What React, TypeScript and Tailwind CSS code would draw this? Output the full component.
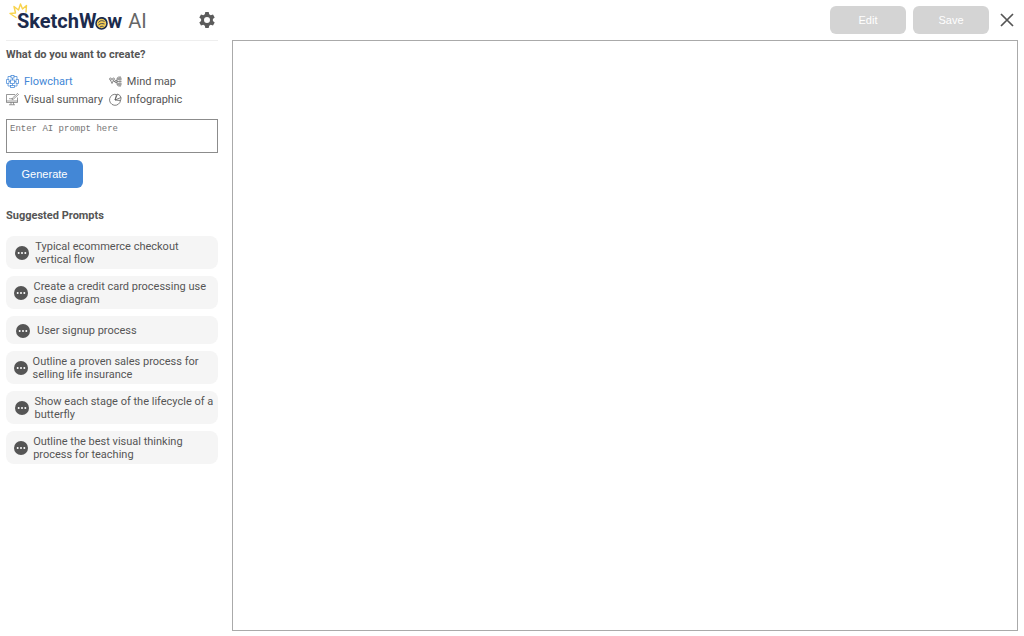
import { useState } from 'react';

const prompts = [
  'Typical ecommerce checkout vertical flow',
  'Create a credit card processing use case diagram',
  'User signup process',
  'Outline a proven sales process for selling life insurance',
  'Show each stage of the lifecycle of a butterfly',
  'Outline the best visual thinking process for teaching',
];

function FlowchartIcon() {
  return (
    <svg className="h-[13px] w-[13px] shrink-0" viewBox="0 0 26 26" fill="none" stroke="currentColor" strokeWidth="1.5" aria-hidden="true">
      <rect x="10" y="1" width="6" height="5" />
      <path d="M10 3H4v5M16 3h6v5M13 6v4M13 18v3M4 18v4h5M22 18v4h-5" />
      <path d="M1 9h5v8H1zM20 9h5v8h-5zM6 13h3M17 13h3" />
      <rect x="9" y="10" width="8" height="7" />
      <rect x="9" y="21" width="8" height="4" />
    </svg>
  );
}

function MindMapIcon() {
  return (
    <svg className="h-[13px] w-[13px] shrink-0" viewBox="0 0 26 26" fill="none" stroke="currentColor" strokeWidth="1.3" aria-hidden="true">
      <circle cx="3" cy="8" r="2" />
      <circle cx="9" cy="8" r="2" />
      <path d="M3 10l3 7 3-7M9 13h4M17 13h8M24 4h-4c-3 0-4 2-4 5v8c0 3 1 5 4 5h4M16 8h4M16 18h4" />
      <rect x="20" y="6" width="4" height="4" />
      <rect x="20" y="16" width="4" height="4" />
      <circle cx="14" cy="13" r="2.500" />
    </svg>
  );
}

function SummaryIcon() {
  return (
    <svg className="h-[13px] w-[13px] shrink-0" viewBox="0 0 26 26" fill="none" stroke="currentColor" strokeWidth="1.2" aria-hidden="true">
      <path d="M18 3H1v16h22V9M1 16h22M10 19v4M15 19v4M6 23.500h12" />
      <path d="M23 1l2 2-10 9-3 1 1-3zM6 12c2-2 3 1 6-1" />
    </svg>
  );
}

function InfographicIcon() {
  return (
    <svg className="h-[13px] w-[13px] shrink-0" viewBox="0 0 26 26" fill="none" stroke="currentColor" strokeWidth="1.5" aria-hidden="true">
      <path d="M15 3A11 11 0 1 0 23 15L12 14z" />
      <path d="M17 2l-5 12 12-5A11 11 0 0 0 17 2zM24 9a11 11 0 0 1-1 6" />
    </svg>
  );
}

const kinds = [
  { label: 'Flowchart', Icon: FlowchartIcon },
  { label: 'Mind map', Icon: MindMapIcon },
  { label: 'Visual summary', Icon: SummaryIcon },
  { label: 'Infographic', Icon: InfographicIcon },
];

function Logo() {
  return (
    <div className="relative flex items-baseline pt-0.5 pl-[11px] leading-6">
      <svg className="absolute -top-1 left-[3px] h-[18px] w-5" viewBox="0 0 20 18" fill="none" stroke="#f8d34c" strokeWidth="1.4" strokeLinecap="round" strokeLinejoin="round" aria-hidden="true">
        <path d="M7 14.500L1 10.500l5.500-.5L5 3.500l4.500 3.500 2-6L13.500 6l4-3.500L17 9" />
      </svg>
      <span className="relative font-[Roboto,sans-serif] text-[20px] font-bold text-[#1c2b4d]">
        SketchW
        <span className="relative">
          o
          <svg className="absolute bottom-[3px] -left-px h-[13px] w-[13px]" viewBox="0 0 13 13" fill="none" aria-hidden="true">
            <circle cx="6.500" cy="6.500" r="5.500" fill="#f3cc57" stroke="#1c2b4d" strokeWidth="1.500" />
            <path d="M3.500 5.500c2-2.500 4-2 6-1M3.500 8c2-2 4-1.500 6-1M5 10c1.500-1 2.500-.8 3.500-.5" stroke="#1c2b4d" strokeWidth=".8" />
          </svg>
        </span>
        w
      </span>
      <span className="ml-1.5 font-[Roboto,sans-serif] text-[20px] text-[#666]">AI</span>
    </div>
  );
}

export default function App() {
  const [kind, setKind] = useState('Flowchart');
  const [prompt, setPrompt] = useState('');

  return (
    <div className="flex h-screen bg-white pr-1.5 pb-[5px] pl-1.5 font-[Roboto,sans-serif] text-[11px] leading-[13px] text-[#555]">
      <aside className="mr-3.5 w-[212px] shrink-0">
        <header className="flex h-[41px] items-center justify-between border-b border-[#eee]">
          <Logo />
          <button type="button" aria-label="Settings" className="mr-0.5">
            <svg className="h-[18px] w-[18px]" viewBox="0 0 18 18" fill="#5c5c5c" aria-hidden="true">
              <path
                fillRule="evenodd"
                d="M7.300 1h3.400l.5 2.300 1.500.9 2.300-.8 1.700 3-1.800 1.600v2l1.800 1.600-1.700 3-2.300-.8-1.500.9-.5 2.300H7.300l-.5-2.300-1.500-.9-2.300.8-1.700-3L3.100 10V8L1.300 6.400l1.700-3 2.300.8 1.500-.9zM9 6a3 3 0 1 0 0 6 3 3 0 0 0 0-6z"
              />
            </svg>
          </button>
        </header>

        <h1 className="mt-[7px] font-bold">What do you want to create?</h1>

        <div className="mt-[11px] grid w-max grid-cols-[max-content_max-content] gap-x-1.5">
          {kinds.map(({ label, Icon }) => (
            <button
              key={label}
              type="button"
              aria-pressed={kind === label}
              onClick={() => setKind(label)}
              className={
                kind === label
                  ? 'flex h-[18px] items-center gap-[5px] text-[#4387d6]'
                  : 'flex h-[18px] items-center gap-[5px]'
              }
            >
              <Icon />
              {label}
            </button>
          ))}
        </div>

        <textarea
          aria-label="AI prompt"
          placeholder="Enter AI prompt here"
          value={prompt}
          onChange={(e) => setPrompt(e.target.value)}
          className="mt-[11px] block h-[34px] w-full resize-none border border-[#8c8c8c] px-[3px] py-1 font-['Liberation_Mono',monospace] text-[9px] leading-[11px] placeholder:text-[#757575]"
        />

        <button
          type="button"
          className="mt-[7px] h-7 w-[77px] rounded-md bg-[#4387d6] font-['Liberation_Sans',sans-serif] text-white"
        >
          Generate
        </button>

        <h2 className="mt-[21px] font-bold">Suggested Prompts</h2>

        <ul className="mt-3.5 flex flex-col gap-[7px]">
          {prompts.map((text) => (
            <li key={text}>
              <button
                type="button"
                onClick={() => setPrompt(text)}
                className="flex min-h-7 w-full items-center rounded-lg bg-[#f5f5f5] pt-1 pr-0.5 pb-[3px] pl-[3px] text-left"
              >
                <span className="flex w-7 min-w-0 justify-center px-[7px]">
                  <svg className="h-3.5 w-3.5 shrink-0" viewBox="0 0 14 14" aria-hidden="true">
                    <circle cx="7" cy="7" r="7" fill="#555" />
                    <g fill="#fff">
                      <circle cx="3.700" cy="7" r="1" />
                      <circle cx="7" cy="7" r="1" />
                      <circle cx="10.300" cy="7" r="1" />
                    </g>
                  </svg>
                </span>
                <span>{text}</span>
              </button>
            </li>
          ))}
        </ul>
      </aside>

      <main className="flex min-w-0 flex-1 flex-col">
        <div className="flex h-10 shrink-0 items-center justify-end gap-[7px] pr-1 font-['Liberation_Sans',sans-serif] text-white">
          <button type="button" className="h-7 w-[76px] rounded-md bg-[#d4d4d4]">
            Edit
          </button>
          <button type="button" className="h-7 w-[76px] rounded-md bg-[#d4d4d4]">
            Save
          </button>
          <button type="button" aria-label="Close" className="ml-1">
            <svg className="h-3.5 w-3.5" viewBox="0 0 14 14" stroke="#555" strokeWidth="1.700" aria-hidden="true">
              <path d="M1 1l12 12M13 1L1 13" />
            </svg>
          </button>
        </div>
        <section aria-label="Canvas" className="flex-1 border border-[#aaa]" />
      </main>
    </div>
  );
}
